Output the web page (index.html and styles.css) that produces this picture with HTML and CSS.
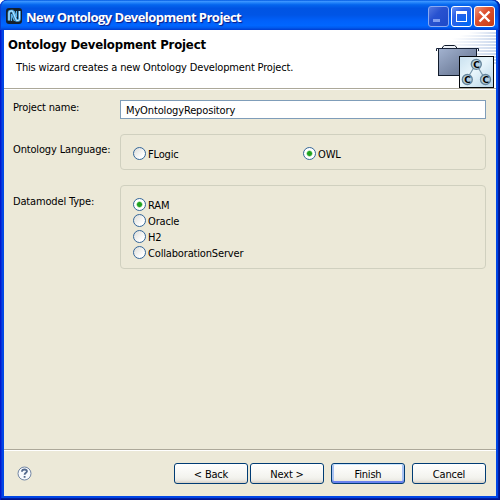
FILE: index.html
```html
<!DOCTYPE html>
<html lang="en">
<head>
<meta charset="utf-8">
<title>New Ontology Development Project</title>
<link rel="stylesheet" href="styles.css">
</head>
<body>
<div class="window">
  <div class="titlebar">
    <svg class="app-icon" width="16" height="16" viewBox="0 0 16 16">
      <rect width="16" height="16" rx="3" fill="#14202c"/>
      <path d="M3 12.500V5q0-2 2-2h1.500l4 9.500H12q1.500 0 1.500-2V3" fill="none" stroke="#4ba9e6" stroke-width="2.600"/>
      <path d="M5.500 13V6l3 7M10.500 3v6L8 3" fill="none" stroke="#5db4ea" stroke-width="1.200"/>
      <path d="M3 12.500V5q0-2 2-2h1.500l4 9.500H12q1.500 0 1.500-2V3" fill="none" stroke="#c4eaff" stroke-width="1"/>
    </svg>
    <span class="title">New Ontology Development Project</span>
    <div class="controls">
      <span class="ctl min"><svg width="19" height="19"><rect x="4" y="12" width="7" height="3" fill="#7f9df0"/></svg></span>
      <span class="ctl max"><svg width="19" height="19"><path d="M4 4h11v11H4zM5 7v7h9V7z" fill="#fff" fill-rule="evenodd"/></svg></span>
      <span class="ctl close"><svg width="19" height="19"><path d="M4.500 4.500l10 10M14.500 4.500l-10 10" stroke="#fff" stroke-width="2.400"/></svg></span>
    </div>
  </div>
  <div class="client">
    <header class="banner">
      <div class="banner-text">
        <h1>Ontology Development Project</h1>
        <p>This wizard creates a new Ontology Development Project.</p>
      </div>
      <svg class="banner-art" width="64" height="58" viewBox="432 30 64 58">
        <defs>
          <linearGradient id="fade"><stop offset="0" stop-color="#d5dff0" stop-opacity="0"/><stop offset="1" stop-color="#ccd9ed"/></linearGradient>
          <linearGradient id="folder" x2="1" y2="1"><stop offset="0" stop-color="#a3b3d0"/><stop offset=".6" stop-color="#7887a4"/><stop offset="1" stop-color="#66748e"/></linearGradient>
          <linearGradient id="tile" x2="1" y2="1"><stop offset="0" stop-color="#c9e1ef"/><stop offset=".45" stop-color="#e9f6fc"/><stop offset="1" stop-color="#b5d3e6"/></linearGradient>
        </defs>
        <g fill="url(#fade)"><rect x="468" y="32" width="28" height="2"/><rect x="459" y="35" width="37" height="2"/><rect x="452" y="38" width="44" height="2"/><rect x="447" y="41" width="49" height="2"/><rect x="443" y="44" width="53" height="2"/><rect x="440" y="47" width="56" height="2"/><rect x="440" y="50" width="56" height="2"/><rect x="440" y="53" width="56" height="2"/><rect x="440" y="56" width="56" height="2"/><rect x="440" y="59" width="56" height="2"/><rect x="440" y="62" width="56" height="2"/></g>
        <path d="M442.500 48v-1l2-1.500h10l2 1.500v1" fill="#eef2f8" stroke="#111b2b"/>
        <rect x="438.500" y="48.500" width="38" height="27" fill="url(#folder)" stroke="#111b2b"/>
        <path d="M436.500 51v-2.500h42V51" fill="none" stroke="#17233a"/>
        <rect x="459.500" y="56.500" width="34" height="31" fill="url(#tile)" stroke="#05080c"/>
        <path d="M476 64l-9 15M476 64l9 15" stroke="#7896aa" stroke-width="1.200"/>
        <g fill="#b5cfdf" stroke="#64849b" stroke-width="1.300"><circle cx="476.300" cy="64.300" r="5"/><circle cx="467.300" cy="79.500" r="5"/><circle cx="485.500" cy="79.500" r="5"/></g>
        <g class="node-label"><text x="476.500" y="67.500">C</text><text x="467.500" y="82.700">C</text><text x="485.700" y="82.700">C</text></g>
      </svg>
    </header>
    <main class="form">
      <label class="name-label" for="project">Project name:</label>
      <input id="project" type="text" value="MyOntologyRepository">
      <span class="language-label">Ontology Language:</span>
      <div class="group language">
        <label class="option"><i class="radio"></i><span>FLogic</span></label>
        <label class="option"><i class="radio on"></i><span>OWL</span></label>
      </div>
      <span class="type-label">Datamodel Type:</span>
      <div class="group datamodel">
        <label class="option"><i class="radio on"></i><span>RAM</span></label>
        <label class="option"><i class="radio"></i><span>Oracle</span></label>
        <label class="option"><i class="radio"></i><span>H2</span></label>
        <label class="option"><i class="radio"></i><span>CollaborationServer</span></label>
      </div>
    </main>
    <footer class="footer">
      <svg class="help" width="15" height="15" viewBox="0 0 15 15">
        <circle cx="7.500" cy="7.500" r="6.500" fill="#f7f9fc" stroke="#7286a4"/>
        <path d="M5 5.800V5q.3-1.500 2.500-1.500T10 5.300c0 1.400-2.400 1.500-2.400 3.400M7.600 10v1.800" fill="none" stroke="#53698c" stroke-width="1.800"/>
      </svg>
      <div class="buttons">
        <button>&lt; Back</button>
        <button>Next &gt;</button>
        <button class="default">Finish</button>
        <button class="cancel">Cancel</button>
      </div>
    </footer>
  </div>
</div>
</body>
</html>
```
FILE: styles.css
```css
* { box-sizing: border-box; }
body {
  margin: 0;
  background: #fff;
  font: 11px/16px "DejaVu Sans Condensed", "DejaVu Sans", sans-serif;
  font-stretch: condensed;
  letter-spacing: -0.16px;
  color: #000;
}
.window {
  width: 500px;
  height: 500px;
  display: flex;
  flex-direction: column;
  padding: 0 4px 4px;
  border-radius: 7px 7px 0 0;
  background: #0046e6;
  box-shadow: inset 1px 0 #0019cf, inset -1px 0 #00138c, inset 0 -1px #00138c, inset -2px 0 #001ea0, inset 0 -2px #001ea0, inset 2px 0 #0831d9;
}
.titlebar {
  height: 30px;
  margin: 0 -4px;
  padding: 4px 6px 0;
  display: flex;
  align-items: center;
  border-radius: 7px 7px 0 0;
  background: linear-gradient(#0058e0 0, #3a93ff 5%, #2888fb 8%, #0465ee 16%, #0054e3 28%, #0055e6 50%, #0061fb 70%, #0066ff 85%, #005bef 92%, #003dd0 100%);
  box-shadow: inset 1px 0 #0a3fd0, inset -1px 0 #00209c, inset -2px 0 #0036c8;
}
.app-icon { margin-top: -2px; }
.title {
  flex: 1;
  margin: -1px 0 0 4px;
  font: bold 13px/16px "Open Sans", sans-serif;
  letter-spacing: -0.53px;
  color: #fff;
  text-shadow: 1px 1px 1px #0a1883;
}
.controls { display: flex; gap: 2px; margin: -1px -1px 0 0; }
.ctl {
  width: 21px;
  height: 21px;
  border: 1px solid #fff;
  border-radius: 3px;
  background: radial-gradient(circle at 80% 90%, #0067f5, #2c62e8 65%, #6c94f5);
}
.ctl svg { display: block; }
.min { border-color: #8aa9f1; background: linear-gradient(135deg, #5377e0, #2852d0 40%, #1d49c8); }
.close { background: linear-gradient(135deg, #ee967c, #de5130 40%, #c63c13); }
.client {
  flex: 1;
  display: flex;
  flex-direction: column;
  background: #ece9d8;
}
.banner {
  height: 60px;
  display: flex;
  justify-content: space-between;
  background: #fff;
  border-bottom: 1px solid #fff;
  box-shadow: inset 0 -1px #aca899;
}
.banner-text { padding: 7px 0 0 4px; }
h1 {
  margin: 0;
  font: bold 13px/16px "DejaVu Sans Condensed", "DejaVu Sans", sans-serif;
  font-stretch: condensed;
  letter-spacing: -0.17px;
}
p { margin: 7px 0 0 8px; }
.banner-art { display: block; }
.node-label { font: bold 9px "DejaVu Sans", sans-serif; text-anchor: middle; letter-spacing: 0; }
.form {
  flex: 1;
  display: grid;
  grid-template-columns: 107px 366px;
  grid-template-rows: 19px 36px 84px;
  row-gap: 15px;
  padding: 10px 10px 0 9px;
}
.form > span { padding-top: 8px; }
.form > .type-label { padding-top: 9px; }
input {
  width: 366px;
  height: 19px;
  border: 1px solid #7f9db9;
  padding: 1px 5px 0;
  background: #fff;
  color: #000;
  font: inherit;
  letter-spacing: -0.14px;
  outline: 0;
}
.group { border: 1px solid #d0d0bf; border-radius: 4px; }
.language { display: grid; grid-template-columns: 170px 1fr; padding: 11px 0 0 12px; }
.datamodel { padding: 11px 0 0 12px; }
.option { display: flex; align-items: flex-start; height: 16px; gap: 2px; }
.option span { margin-top: 1px; }
.radio {
  width: 13px;
  height: 13px;
  margin-top: 1px;
  border: 1px solid #336699;
  border-radius: 50%;
  background: linear-gradient(135deg, #dcdcd7, #fff 75%);
}
.radio.on { background: radial-gradient(circle, #21a121 0 2px, #7cd07c 2.600px, #fff 3.400px); }
.footer {
  height: 47px;
  display: flex;
  justify-content: space-between;
  padding: 12px 10px 0 13px;
  border-top: 1px solid #aca899;
  box-shadow: inset 0 1px #fff;
}
.help { margin-top: 4px; }
.buttons { display: flex; gap: 2px; margin-top: 1px; }
button {
  width: 74px;
  height: 21px;
  padding: 2px 0 0;
  border: 1px solid #003c74;
  border-radius: 3px;
  background: linear-gradient(#fff, #f3f3ee 70%, #ecebe5 85%, #d6d0c5);
  color: #000;
  font: inherit;
  letter-spacing: -0.2px;
}
.default { margin-left: 5px; box-shadow: inset 0 1px #cee7ff, inset 0 -2px #6982ee, inset 2px 0 #a9c3f3, inset -2px 0 #a9c3f3; }
.cancel { margin-left: 5px; }
```
